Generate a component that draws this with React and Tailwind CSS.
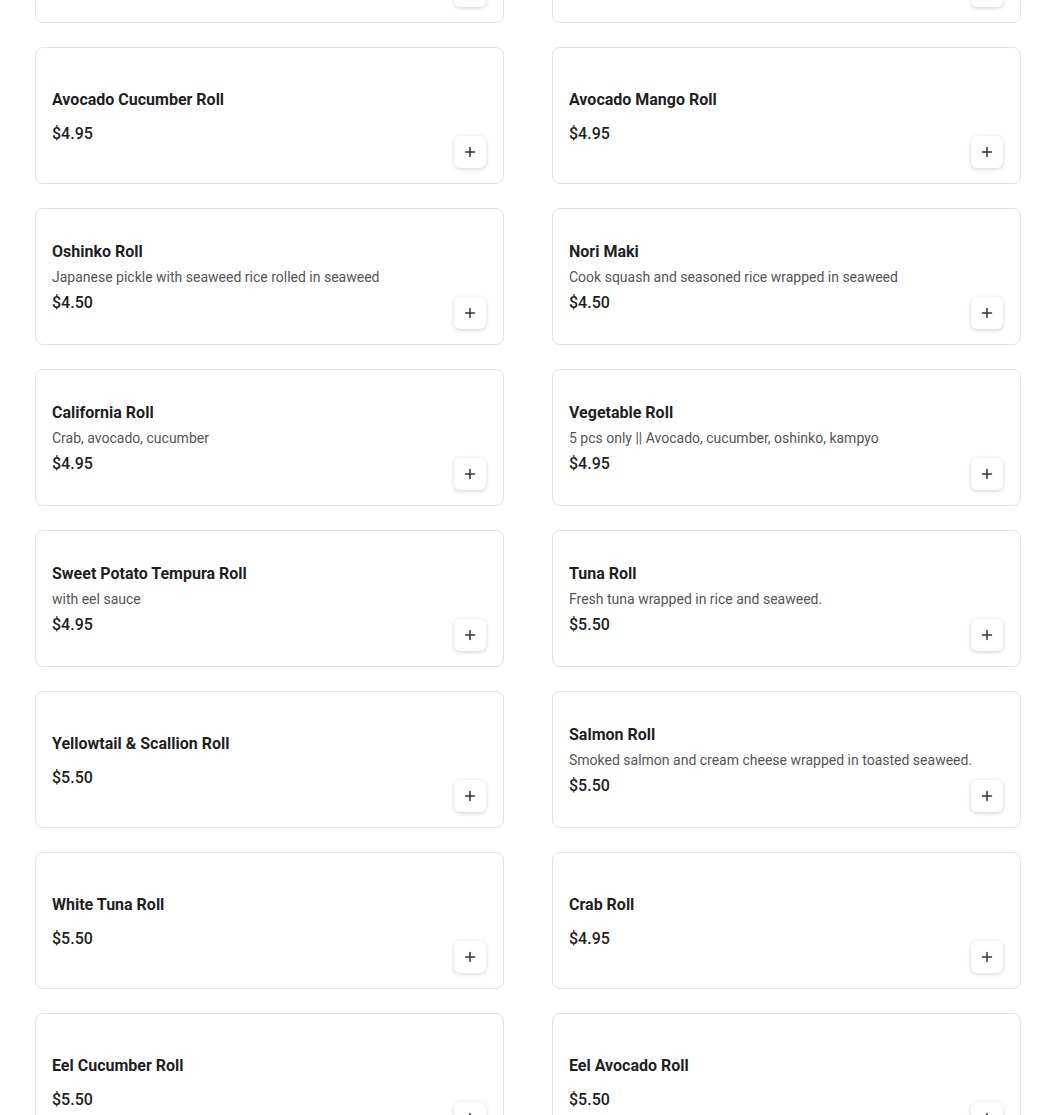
import React from "react";

const items = [
  { name: "Spicy Tuna Roll", price: "$5.50" },
  { name: "Spicy Salmon Roll", price: "$5.50" },
  { name: "Avocado Cucumber Roll", price: "$4.95" },
  { name: "Avocado Mango Roll", price: "$4.95" },
  { name: "Oshinko Roll", desc: "Japanese pickle with seaweed rice rolled in seaweed", price: "$4.50" },
  { name: "Nori Maki", desc: "Cook squash and seasoned rice wrapped in seaweed", price: "$4.50" },
  { name: "California Roll", desc: "Crab, avocado, cucumber", price: "$4.95" },
  { name: "Vegetable Roll", desc: "5 pcs only || Avocado, cucumber, oshinko, kampyo", price: "$4.95" },
  { name: "Sweet Potato Tempura Roll", desc: "with eel sauce", price: "$4.95" },
  { name: "Tuna Roll", desc: "Fresh tuna wrapped in rice and seaweed.", price: "$5.50" },
  { name: "Yellowtail & Scallion Roll", price: "$5.50" },
  { name: "Salmon Roll", desc: "Smoked salmon and cream cheese wrapped in toasted seaweed.", price: "$5.50" },
  { name: "White Tuna Roll", price: "$5.50" },
  { name: "Crab Roll", price: "$4.95" },
  { name: "Eel Cucumber Roll", price: "$5.50" },
  { name: "Eel Avocado Roll", price: "$5.50" },
];

const PlusIcon = () => (
  <svg width="12" height="12" viewBox="0 0 12 12" fill="none">
    <path d="M6 1.5v9M1.5 6h9" stroke="#333" strokeWidth="1.5" strokeLinecap="round" />
  </svg>
);

const MenuCard = ({ item }) => (
  <div className="relative h-[137px] rounded-lg border border-[#e3e3e3] bg-white px-4 pt-[2px] flex flex-col justify-center">
    <div className="text-[16px] leading-6 font-bold text-[#1f1f1f]">{item.name}</div>
    {item.desc ? (
      <div className="text-[14px] leading-5 text-[#555] mt-[3px]">{item.desc}</div>
    ) : null}
    <div className={`text-[16px] leading-6 font-medium text-[#1f1f1f] ${item.desc ? "mt-1" : "mt-[10px]"}`}>
      {item.price}
    </div>
    <button className="absolute right-[17px] bottom-[15px] w-8 h-8 rounded-md bg-white flex items-center justify-center shadow-[0_1px_4px_rgba(0,0,0,0.18)]">
      <PlusIcon />
    </button>
  </div>
);

export default function App() {
  return (
    <div
      className="w-[1050px] h-[1115px] overflow-hidden bg-white"
      style={{ fontFamily: "Roboto, 'Liberation Sans', sans-serif" }}
    >
      <div className="-mt-[114px] pl-[35px] pr-[29px] grid grid-cols-2 gap-x-[48px] gap-y-[24px]">
        {items.map((item, i) => (
          <MenuCard key={i} item={item} />
        ))}
      </div>
    </div>
  );
}
